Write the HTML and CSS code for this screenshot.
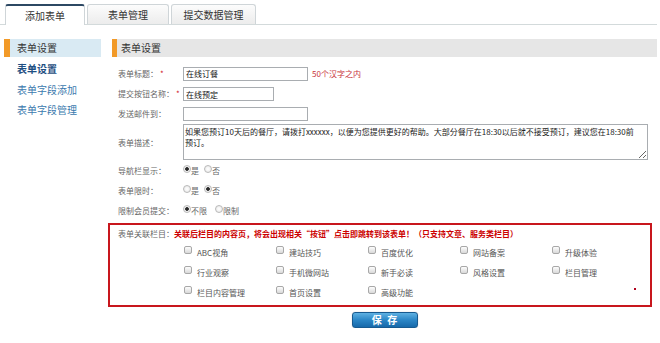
FILE: index.html
```html
<!DOCTYPE html>
<html lang="zh-CN">
<head>
<meta charset="utf-8">
<title>添加表单</title>
<link rel="stylesheet" href="styles.css">
</head>
<body>
<div class="page">
  <nav class="tabs">
    <a class="tab tab-active tab-w80">添加表单</a>
    <a class="tab tab-w82">表单管理</a>
    <a class="tab tab-w85">提交数据管理</a>
  </nav>
  <div class="layout">
    <aside class="side">
      <div class="side-head">表单设置</div>
      <ul class="side-links">
        <li class="side-cur">表单设置</li>
        <li>表单字段添加</li>
        <li>表单字段管理</li>
      </ul>
    </aside>
    <main class="main">
      <div class="main-head">表单设置</div>
      <form class="form">
        <div class="row row-first">
          <label class="row-label">表单标题：<span class="req">*</span></label>
          <input class="txt txt-long" type="text" value="在线订餐">
          <span class="hint">50个汉字之内</span>
        </div>
        <div class="row">
          <label class="row-label">提交按钮名称：<span class="req">*</span></label>
          <input class="txt txt-short" type="text" value="在线预定">
        </div>
        <div class="row">
          <label class="row-label">发送邮件到：</label>
          <input class="txt txt-long" type="text" value="">
        </div>
        <div class="row row-area">
          <label class="row-label">表单描述：</label>
          <textarea class="area">如果您预订10天后的餐厅，请拨打xxxxxx，以便为您提供更好的帮助。大部分餐厅在18:30以后就不接受预订，建议您在18:30前
预订。</textarea>
        </div>
        <div class="row">
          <label class="row-label">导航栏显示：</label>
          <div class="opts">
            <label class="opt"><input class="radio" type="radio" name="nav" checked>是</label>
            <label class="opt"><input class="radio" type="radio" name="nav">否</label>
          </div>
        </div>
        <div class="row">
          <label class="row-label">表单限时：</label>
          <div class="opts">
            <label class="opt"><input class="radio" type="radio" name="lim">是</label>
            <label class="opt"><input class="radio" type="radio" name="lim" checked>否</label>
          </div>
        </div>
        <div class="row">
          <label class="row-label">限制会员提交：</label>
          <div class="opts opts-wide">
            <label class="opt"><input class="radio" type="radio" name="mem" checked>不限</label>
            <label class="opt"><input class="radio" type="radio" name="mem">限制</label>
          </div>
        </div>
        <div class="assoc">
          <div class="assoc-head">表单关联栏目：<span class="assoc-note">关联后栏目的内容页，将会出现相关“按钮”点击即跳转到该表单！（只支持文章、服务类栏目）</span></div>
          <div class="assoc-grid">
            <label class="chk"><input class="box" type="checkbox">ABC视角</label>
            <label class="chk"><input class="box" type="checkbox">建站技巧</label>
            <label class="chk"><input class="box" type="checkbox">百度优化</label>
            <label class="chk"><input class="box" type="checkbox">网站备案</label>
            <label class="chk"><input class="box" type="checkbox">升级体验</label>
            <label class="chk"><input class="box" type="checkbox">行业观察</label>
            <label class="chk"><input class="box" type="checkbox">手机微网站</label>
            <label class="chk"><input class="box" type="checkbox">新手必读</label>
            <label class="chk"><input class="box" type="checkbox">风格设置</label>
            <label class="chk"><input class="box" type="checkbox">栏目管理</label>
            <label class="chk"><input class="box" type="checkbox">栏目内容管理</label>
            <label class="chk"><input class="box" type="checkbox">首页设置</label>
            <label class="chk"><input class="box" type="checkbox">高级功能</label>
            <span class="assoc-dot"></span>
          </div>
        </div>
        <div class="actions">
          <button class="btn-save" type="button">保 存</button>
        </div>
      </form>
    </main>
  </div>
</div>
</body>
</html>
```
FILE: styles.css
```css
* {
  box-sizing: border-box;
  margin: 0;
  padding: 0;
}

body {
  font-family: "Noto Sans CJK SC", "Liberation Sans", sans-serif;
  font-size: 8px;
  line-height: 1.2;
  color: #666;
  background: #fff;
}

.page {
  width: 657px;
}

/* tabs */
.tabs {
  display: flex;
  gap: 2px;
  height: 25px;
  padding: 4px 0 0 5px;
  border-bottom: 1px solid #d3dadb;
}

.tab {
  height: 20px;
  display: flex;
  align-items: center;
  justify-content: center;
  border: 1px solid #cfd5d8;
  border-bottom: none;
  border-radius: 3px 3px 0 0;
  background: linear-gradient(#fcfcfc, #ececec);
  font-size: 10px;
  color: #333;
}

.tab-active {
  height: 21px;
  margin-bottom: -1px;
  background: #fff;
  border-top: 2px solid #2c4863;
}

.tab-w80 { width: 80px; }
.tab-w82 { width: 82px; }
.tab-w85 { width: 85px; }

/* layout */
.layout {
  display: flex;
  gap: 7px;
  padding: 14px 0 0 4px;
}

.side {
  width: 97px;
  flex: none;
}

.side-head {
  height: 18px;
  display: flex;
  align-items: center;
  padding-left: 7px;
  background: #d9eaf3;
  border-left: 6px solid #f29a28;
  font-size: 10px;
  color: #333;
}

.side-links {
  list-style: none;
  padding: 2px 0 0 13px;
}

.side-links li {
  height: 20.5px;
  line-height: 20px;
  font-size: 10px;
  color: #3b7aae;
}

.side-links .side-cur {
  color: #1f4f82;
  font-weight: bold;
}

.main {
  flex: 1;
  min-width: 0;
}

.main-head {
  height: 18px;
  margin-left: 4px;
  display: flex;
  align-items: center;
  padding-left: 4px;
  background: #e6e6e6;
  border-left: 5px solid #f29a28;
  font-size: 10px;
  color: #333;
}

/* form */
.form {
  padding-top: 6px;
}

.row {
  display: flex;
  align-items: center;
  height: 20px;
  padding-left: 10px;
}

.row-first {
  height: 21px;
}

.row-area {
  height: 37px;
  align-items: flex-start;
}

.row-area .row-label {
  align-self: center;
}

.row-label {
  width: 65px;
  flex: none;
  color: #666;
  white-space: nowrap;
}

.req {
  color: #d0202a;
  margin-left: 2px;
}

.txt {
  height: 14px;
  border: 1px solid #a9adb1;
  padding: 0 2px;
  font-family: inherit;
  font-size: 8px;
  color: #111;
  background: #fff;
  outline: none;
}

.txt-long { width: 125px; }
.txt-short { width: 91px; }

.hint {
  margin-left: 4px;
  color: #c8323a;
}

.area {
  width: 465px;
  height: 36px;
  border: 1px solid #a9adb1;
  padding: 1px 1px;
  font-family: inherit;
  font-size: 8px;
  line-height: 11px;
  color: #222;
  outline: none;
}

.opts {
  display: flex;
  gap: 5px;
}

.opts-wide {
  gap: 8px;
}

.opt {
  display: inline-flex;
  align-items: center;
  color: #666;
}

.radio {
  appearance: none;
  width: 8px;
  height: 8px;
  margin-bottom: 5px;
  border: 1px solid #b9b9b9;
  border-radius: 50%;
  background: radial-gradient(circle, #fff 0, #e6e6e6 100%);
}

.radio:checked {
  background: radial-gradient(circle, #2a2a2a 0 1.5px, #f2f2f2 2.2px);
}

/* associated columns */
.assoc {
  margin: 2px 5px 0 0;
  border: 2px solid #c8161d;
  padding: 0 0 2px 8px;
}

.assoc-head {
  height: 18px;
  display: flex;
  align-items: center;
  white-space: nowrap;
  color: #666;
}

.assoc-note {
  color: #cc0000;
  font-weight: bold;
}

.assoc-grid {
  display: grid;
  grid-template-columns: repeat(5, 92px);
  grid-auto-rows: 20px;
  margin-left: 66px;
}

.chk {
  display: flex;
  align-items: center;
  color: #555;
}

.box {
  appearance: none;
  width: 8px;
  height: 8px;
  margin: 0 5px 6px 0;
  border: 1px solid #a8a8a8;
  border-radius: 2px;
  background: linear-gradient(#fdfdfd, #d9d9d9);
}

.assoc-dot {
  grid-column: 5;
  grid-row: 3;
  justify-self: end;
  align-self: center;
  width: 2px;
  height: 2px;
  margin: 0 8px 8px 0;
  background: #b0001c;
}

.actions {
  display: flex;
  justify-content: center;
  padding: 5px 0 0 4px;
}

.btn-save {
  width: 66px;
  height: 16px;
  border: 1px solid #175a90;
  border-radius: 3px;
  background: linear-gradient(#5fb1e2, #2b86c6 50%, #1769aa);
  box-shadow: 0 0 1px rgba(0, 0, 0, 0.35);
  font-family: inherit;
  font-size: 10px;
  font-weight: bold;
  line-height: 14px;
  word-spacing: 3px;
  color: #fff;
}
```
